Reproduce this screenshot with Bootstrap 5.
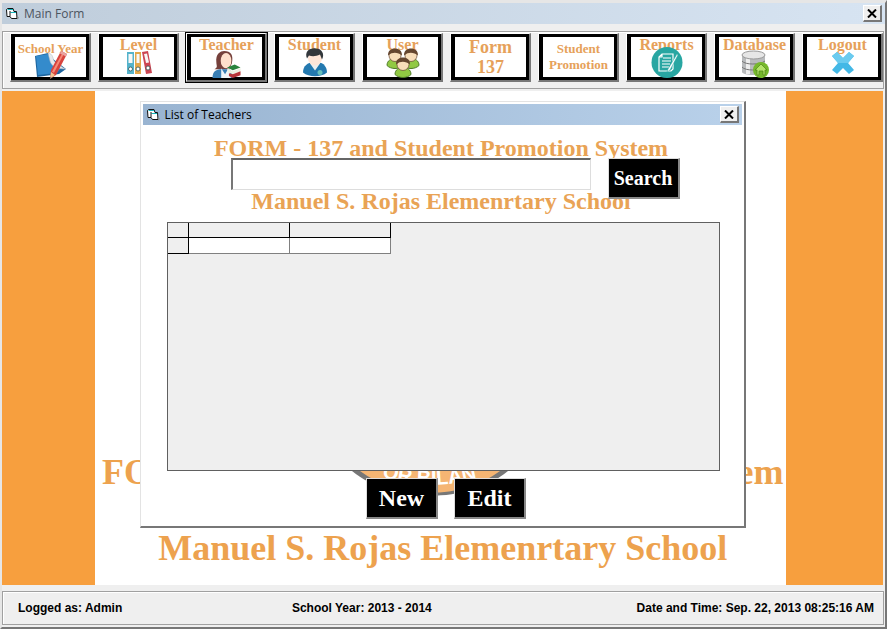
<!DOCTYPE html>
<html lang="en">
<head>
<meta charset="utf-8">
<meta name="viewport" content="width=device-width, initial-scale=1">
<title>Main Form</title>
<link href="https://cdn.jsdelivr.net/npm/bootstrap@5.3.0/dist/css/bootstrap.min.css" rel="stylesheet">
<style>
:root { --face: #efefef; --orange: #f79f3e; --ink: #e6a15a; }
body { background: var(--face); font-family: "Liberation Sans", Arial, sans-serif; color: #000; }
.main-window { background: var(--face); border: 2px solid #e6e6e6; border-top-width: 3px; border-right: 2px solid #777; border-bottom: 2px solid #777; }
.caption { height: 21px; font: 12px/20px "Open Sans", "Noto Sans", sans-serif; margin: 0; padding: 0 3px 0 4px; gap: 5px; }
.caption-main { background: linear-gradient(90deg, #bfcddb, #d7e4f2); color: #4c545e; }
.caption-dialog { background: linear-gradient(90deg, #99b4d1, #b9d1ea); }
.close-btn { width: 19px; height: 17px; background: var(--face); border: 1px solid #fff; border-right: 2px solid #777; border-bottom: 2px solid #777; }
.toolbar-frame, .status-frame { border: 1px solid #a0a0a0; box-shadow: inset 1px 1px #fff; margin-right: 1px; }
.toolbar-frame { height: 58px; margin-top: 7px; padding: 1px 0 0 7px; gap: 7px; }
.tool { flex: 1 1 0; min-width: 0; height: 49px; border: 1px solid #fff; border-right: 2px solid #777; border-bottom: 2px solid #777; background: #000; padding: 3px 3px 3px 4px; }
.tool.current { outline: 1px solid #000; }
.tool-face { background: #fff; height: 40px; color: var(--ink); font: bold 16px/16px "Liberation Serif", "Times New Roman", serif; white-space: nowrap; }
.tool-face.small-label { font-size: 13px; line-height: 16px; }
.tool-face.tall-label { font-size: 18px; line-height: 20px; }
.tool-face svg { display: block; margin-top: -3px; flex: none; }
.tool-face svg.raised { margin-top: -6px; }
.desk { display: grid; grid-template-columns: 10.5% 1fr 11%; background: #fff; margin: 2px 2px 0 0; }
.desk > * { grid-row: 1; min-width: 0; }
.band { background: var(--orange); }
.band-left { grid-column: 1; }
.band-right { grid-column: 3; }
.banner { grid-column: 2; font-family: "Liberation Serif", "Times New Roman", serif; font-weight: bold; color: #eda24e; font-size: 36px; line-height: 40px; padding: 0 0 17px 5px; white-space: nowrap; gap: 36px; }
.dialog-layer { grid-column: 1 / -1; z-index: 1; padding: 10px 0 57px; }
.dialog-window { width: 606px; max-width: 100%; background: #fff; border: 1px solid #e3e3e3; border-right: 2px solid #777; border-bottom: 2px solid #777; padding: 2px 2px 7px; }
.dialog-heading { font: bold 24px/24px "Liberation Serif", "Times New Roman", serif; color: #e9a355; margin: 0 2px 0 0; white-space: nowrap; }
.dialog-title { padding-top: 11px; }
.search-line { margin: -2px 0 -10px; padding: 0 62px 0 88px; gap: 17px; position: relative; }
.search-box { height: 32px; border: 1px solid #ddd; border-top: 2px solid #666; border-left: 2px solid #777; background: #fff; min-width: 0; }
.action { width: 72px; height: 41px; background: #000; color: #fff; border: 1px solid #ddd; border-right: 2px solid #888; border-bottom: 2px solid #888; padding: 0; font: bold 24px/34px "Liberation Serif", "Times New Roman", serif; }
.search-action { font-size: 20px; }
.records { height: 249px; margin: 9px 22px 0 24px; background: var(--face); border: 1px solid #606060; }
.records table { border-collapse: collapse; table-layout: fixed; width: 223px; }
.records th, .records td { height: 16px; padding: 0; border-right: 1px solid #808080; border-bottom: 1px solid #808080; background: #fff; }
.records thead th { height: 14px; }
.records th { background: var(--face); border-color: #000; }
.records .stub { width: 21px; }
.dialog-foot { display: grid; grid-template-columns: 72px 72px; justify-content: center; column-gap: 16px; padding-left: 8px; }
.seal { grid-area: 1 / 1 / 2 / 3; justify-self: center; margin-right: 32px; }
.dialog-foot button { grid-row: 1; z-index: 1; margin-top: 7px; }
.new-action { grid-column: 1; }
.edit-action { grid-column: 2; }
.status-frame { height: 34px; margin-top: 6px; margin-bottom: 2px; padding: 0 9px 0 15px; font-weight: bold; font-size: 12px; }
.status-frame > * { white-space: nowrap; }
.status-user { flex: 0 0 32%; }
</style>
<script src="https://cdn.jsdelivr.net/npm/bootstrap@5.3.0/dist/js/bootstrap.bundle.min.js"></script>
</head>
<body>
<svg class="d-none" aria-hidden="true">
  <symbol id="form-icon" viewBox="0 0 13 12"><path d="M.5 1.500l1-1H7l1 3h2.500l.5 7H5.500L4 8.500H1z" fill="#fff" stroke="#111"/><path d="M1.500 1.500H7M4.500 4.500H10" stroke="#17b3ba"/><path d="M4 3v5.500" stroke="#111"/><path d="M11 7.500l2 2.500-2 1.500z" fill="#888"/></symbol>
  <symbol id="cross" viewBox="0 0 10 9"><path d="M1 .5l8 8M9 .5l-8 8" stroke="#000" stroke-width="2"/></symbol>
</svg>
<div class="main-window d-flex flex-column min-vh-100">
  <header class="caption caption-main d-flex align-items-center">
    <svg width="13" height="12"><use href="#form-icon"/></svg><span class="flex-grow-1">Main Form</span>
    <button class="close-btn d-flex align-items-center justify-content-center p-0" aria-label="Close main form"><svg width="10" height="9"><use href="#cross"/></svg></button>
  </header>
  <nav class="toolbar-frame d-flex" aria-label="Main">
    <button class="tool"><span class="tool-face small-label d-flex flex-column align-items-center pt-1">School Year<svg class="raised" width="32" height="28" viewBox="0 0 32 28"><path d="M0 5L13 2l5 6 13 10-7 5-22 3z" fill="#1d659f"/><path d="M1 5l12-2 4 9 10 4-5 6-19 2z" fill="#348bcc"/><path d="M13 2c6 1 4 6 7 9l10 7c-8 0-14-3-15-8z" fill="#e6e9ec" stroke="#aeb7bf" stroke-width=".5"/><path d="M26 0l6 3-11 21-6 4 1-9z" fill="#d8433d"/><path d="M28 1l1.500.7-10.500 20-2-1z" fill="#f58a78"/><path d="M15 28l1-7 4 3z" fill="#f2c591"/><path d="M15 28l.4-2 1.400.8z" fill="#333"/><path d="M26 0l6 3-1 2.500-6-3z" fill="#e8a3a0"/></svg></span></button>
    <button class="tool"><span class="tool-face d-flex flex-column align-items-center">Level<svg width="26" height="25" viewBox="0 0 26 25"><path d="M1 2h7v22H1z" fill="#55b3cb"/><path d="M9 2h6v22H9z" fill="#e3a74a"/><path d="M16 2l6-1 4 22-6 1z" fill="#cc4552"/><path d="M2.500 4h4v9h-4zM10.500 4h3v9h-3zM18 4l3-.5 2 9-3 .5z" fill="#f7f7f7"/><g fill="#fff" stroke="#355" stroke-width=".8"><circle cx="4.500" cy="19" r="2"/><circle cx="12" cy="19" r="2"/><circle cx="22" cy="18" r="2"/></g></svg></span></button>
    <button class="tool current"><span class="tool-face d-flex flex-column align-items-center">Teacher<svg width="30" height="29" viewBox="0 0 30 30"><path d="M4 13C3 4 8 1 12 1c7 0 10 4 8 13l-3 6H2c4-2 2-4 2-7z" fill="#75403b"/><ellipse cx="14" cy="11" rx="5.500" ry="8" fill="#ffe0cc"/><path d="M0 29c0-8 5-9 10-9h7c3 1 4 5 4 9z" fill="#397fb5"/><path d="M9 19l4 6 4-7 2 11H9z" fill="#eef4f8"/><path d="M15 18l8-3 6 3-8 3z" fill="#29833d"/><path d="M15 19l6 3 8-3v3l-8 3-5-2z" fill="#edf0df"/><path d="M17 24l4 1 8-3v4l-8 3-4-2z" fill="#b83539"/></svg></span></button>
    <button class="tool"><span class="tool-face d-flex flex-column align-items-center">Student<svg class="raised" width="26" height="30" viewBox="0 0 26 29"><path d="M1 25c0-7 5-10 10-10h5c6 0 9 5 9 10-6 5-18 5-24 0z" fill="#2479af"/><path d="M8 16l5 7 5-7z" fill="#eee"/><circle cx="13" cy="11" r="7" fill="#ffe6d8"/><path d="M5 11C2 4 8 0 14 1c6 0 9 6 6 11l-2-5c-4 2-8 2-11 1z" fill="#33383c"/><circle cx="18" cy="25" r="2.500" fill="#68c0bc"/></svg></span></button>
    <button class="tool"><span class="tool-face d-flex flex-column align-items-center">User<svg class="raised" width="34" height="31" viewBox="0 0 34 30"><g id="person"><path d="M1 18c0-5 4-7 8-7s8 2 8 7c-4 4-12 4-16 0z" fill="#91c943" stroke="#4e7b28"/><circle cx="9" cy="8" r="6" fill="#f8ddb9" stroke="#65462f" stroke-width=".7"/><path d="M2 8C2 3 5 1 9 1s7 2 7 7c-4-3-9-4-14 0z" fill="#65462f"/></g><use href="#person" x="16"/><use href="#person" x="8" y="9"/></svg></span></button>
    <button class="tool"><span class="tool-face tall-label d-flex align-items-center justify-content-center">Form<br>137</span></button>
    <button class="tool"><span class="tool-face small-label d-flex align-items-center justify-content-center">Student<br>Promotion</span></button>
    <button class="tool"><span class="tool-face d-flex flex-column align-items-center">Reports<svg class="raised" width="32" height="31" viewBox="0 0 32 31"><circle cx="16" cy="15.500" r="15.500" fill="#28a6a2"/><path d="M11 7h11v15l-2 2H8V10zM11 7v3H8M12 11h8M11 14h9M11 17h8M11 20h7" fill="none" stroke="#fff" stroke-width="1.200"/><path d="M26 7l-9 15-1 3 3-2 8-15z" fill="#fff" stroke="#28a6a2" stroke-width=".5"/></svg></span></button>
    <button class="tool"><span class="tool-face d-flex flex-column align-items-center">Database<svg width="28" height="28" viewBox="0 0 28 28"><path d="M1 5v17c1 4 20 4 23 0V5z" fill="#b9bbbd"/><path d="M5 7v17h4V8z" fill="#eee"/><ellipse cx="12.500" cy="5" rx="11.500" ry="4" fill="#e6e6e6" stroke="#999"/><path d="M1 11c3 4 18 4 23 0M1 17c3 4 18 4 23 0" fill="none" stroke="#777"/><circle cx="20" cy="20" r="8" fill="#76b82c"/><path d="M14 20l6-6 6 6h-2v5h-2v-4h-4v4h-2v-5z" fill="#b4e36a" stroke="#4e8517" stroke-width=".7"/></svg></span></button>
    <button class="tool"><span class="tool-face d-flex flex-column align-items-center">Logout<svg width="24" height="26" viewBox="0 0 24 26"><path d="M1 6l5-4 6 6 6-6 5 4-6 7 6 7-5 4-6-6-6 6-5-4 6-7z" fill="#43b8e6"/><path d="M1 6l5-4 6 6 6-6 5 4-6 7H7z" fill="#6bcbef"/></svg></span></button>
  </nav>
  <main class="desk flex-grow-1">
    <div class="band band-left"></div><div class="band band-right"></div>
    <div class="banner d-flex flex-column justify-content-end align-items-center"><p class="mb-0">FORM - 137 and Student Promotion System</p><p class="mb-0">Manuel S. Rojas Elemenrtary School</p></div>
    <div class="dialog-layer d-flex justify-content-center align-items-start">
      <section class="dialog-window" aria-label="List of Teachers">
        <header class="caption caption-dialog d-flex align-items-center"><svg width="13" height="12"><use href="#form-icon"/></svg><span class="flex-grow-1">List of Teachers</span><button class="close-btn d-flex align-items-center justify-content-center p-0" aria-label="Close list"><svg width="10" height="9"><use href="#cross"/></svg></button></header>
        <h1 class="dialog-heading dialog-title text-center">FORM - 137 and Student Promotion System</h1>
        <form class="search-line d-flex align-items-start"><input class="search-box flex-grow-1" type="text" aria-label="Search teachers"><button type="button" class="action search-action">Search</button></form>
        <h2 class="dialog-heading text-center">Manuel S. Rojas Elemenrtary School</h2>
        <div class="records"><table><thead><tr><th class="stub"></th><th></th><th></th></tr></thead><tbody><tr><th></th><td></td><td></td></tr></tbody></table></div>
        <div class="dialog-foot">
          <svg class="seal" width="156" height="26" viewBox="0 0 156 26"><path d="M0 0C40 33 116 33 156 0z" fill="#777"/><path d="M8 0c38 29 102 29 140 0z" fill="#f5b573"/><path id="seal-arc" d="M24 4Q84 25 150 0" fill="none"/><text fill="#fff" font-family="Liberation Sans, Arial, sans-serif" font-size="20" font-weight="bold"><textPath href="#seal-arc" startOffset="6">OR BILAN</textPath></text></svg>
          <button class="action new-action">New</button><button class="action edit-action">Edit</button>
        </div>
      </section>
    </div>
  </main>
  <footer class="status-frame d-flex align-items-center"><span class="status-user">Logged as: Admin</span><span>School Year: 2013 - 2014</span><span class="ms-auto">Date and Time: Sep. 22, 2013 08:25:16 AM</span></footer>
</div>
</body>
</html>
